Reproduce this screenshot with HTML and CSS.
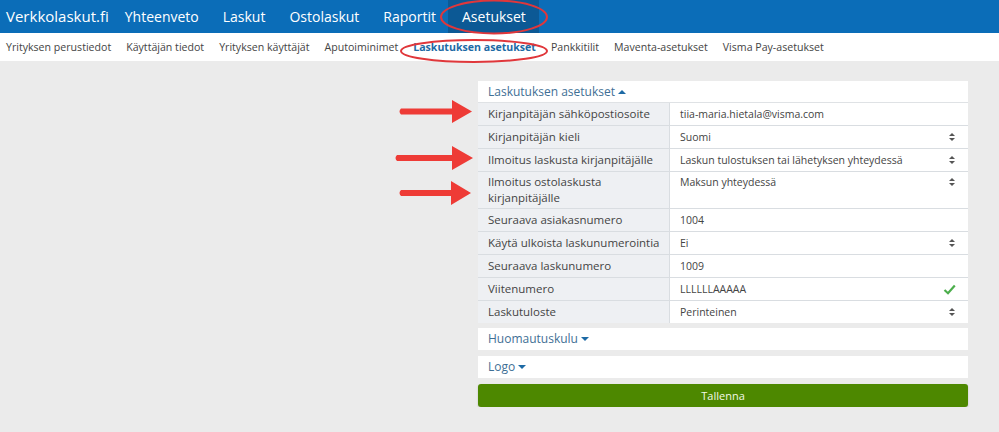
FILE: index.html
```html
<!DOCTYPE html>
<html lang="fi">
<head>
  <meta charset="UTF-8" />
  <meta name="viewport" content="width=device-width, initial-scale=1.0" />
  <title>Laskutuksen asetukset</title>
  <link rel="stylesheet" href="styles.css">
</head>
<body>
  <div class="topbar">
    <span class="brand">Verkkolaskut.fi</span>
    <span class="top-item">Yhteenveto</span>
    <span class="top-item">Laskut</span>
    <span class="top-item">Ostolaskut</span>
    <span class="top-item">Raportit</span>
    <span class="top-item active">Asetukset</span>
  </div>
  <div class="subnav">
    <span class="sub-item">Yrityksen perustiedot</span>
    <span class="sub-item">Käyttäjän tiedot</span>
    <span class="sub-item">Yrityksen käyttäjät</span>
    <span class="sub-item">Aputoiminimet</span>
    <span class="sub-item active">Laskutuksen asetukset</span>
    <span class="sub-item">Pankkitilit</span>
    <span class="sub-item">Maventa-asetukset</span>
    <span class="sub-item">Visma Pay-asetukset</span>
  </div>

  <div class="content">
    <div class="panel">
      <div class="panel-head open">Laskutuksen asetukset <span class="caret up"></span></div>
      <div class="rows">
        <div class="label">Kirjanpitäjän sähköpostiosoite</div>
        <div class="value">tiia-maria.hietala@visma.com</div>

        <div class="label">Kirjanpitäjän kieli</div>
        <div class="value">Suomi <span class="updown"></span></div>

        <div class="label">Ilmoitus laskusta kirjanpitäjälle</div>
        <div class="value">Laskun tulostuksen tai lähetyksen yhteydessä <span class="updown"></span></div>

        <div class="label tall">Ilmoitus ostolaskusta<br>kirjanpitäjälle</div>
        <div class="value tall">Maksun yhteydessä <span class="updown"></span></div>

        <div class="label">Seuraava asiakasnumero</div>
        <div class="value">1004</div>

        <div class="label">Käytä ulkoista laskunumerointia</div>
        <div class="value">Ei <span class="updown"></span></div>

        <div class="label">Seuraava laskunumero</div>
        <div class="value">1009</div>

        <div class="label">Viitenumero</div>
        <div class="value">LLLLLLAAAAA
          <svg class="check" width="13" height="11" viewBox="0 0 13 11"><path d="M1.5 6 L5 9.2 L11.8 1.5" fill="none" stroke="#4cae4c" stroke-width="2.2"/></svg>
        </div>

        <div class="label last">Laskutuloste</div>
        <div class="value last">Perinteinen <span class="updown"></span></div>
      </div>
    </div>

    <div class="panel">
      <div class="panel-head">Huomautuskulu <span class="caret down"></span></div>
    </div>
    <div class="panel">
      <div class="panel-head">Logo <span class="caret down"></span></div>
    </div>
    <button class="save">Tallenna</button>
  </div>

  <svg class="marks" width="999" height="432" viewBox="0 0 999 432">
    <g fill="none" stroke="#e0373b" stroke-width="2">
      <ellipse cx="494" cy="17" rx="53" ry="16.5"/>
      <ellipse cx="474" cy="51" rx="73" ry="11"/>
    </g>
    <g fill="#ee3b36">
      <path d="M401 108.5 H452 V100 L472 111.5 L452 123 V114.5 H401 Q398 111.5 401 108.5 Z"/>
      <path d="M397 155 H452 V146 L473 158 L452 170 V161 H397 Q394 158 397 155 Z"/>
      <path d="M401 190 H451 V181 L471 193 L451 205 V196 H401 Q398 193 401 190 Z"/>
    </g>
  </svg>
</body>
</html>
```

FILE: styles.css
```css
body {
  font-family: "Open Sans", Arial, sans-serif;
  background: #ebebeb;
  margin: 0;
  padding: 0;
  color: #444;
}
.topbar {
  background: #0b6db8;
  height: 33px;
  display: flex;
  align-items: stretch;
  padding-left: 6px;
}
.brand,
.top-item {
  color: white;
  font-size: 14px;
  line-height: 33px;
  white-space: nowrap;
}
.brand {
  font-size: 15px;
  margin-right: 4px;
}
.top-item {
  padding: 0 12px;
}
.top-item.active {
  background: #0c5995;
  padding: 0 13px 0 14px;
}
.subnav {
  background: white;
  height: 28px;
  display: flex;
  align-items: center;
  padding-left: 6px;
}
.sub-item {
  font-size: 10.6px;
  color: #444;
  margin-right: 15px;
  white-space: nowrap;
}
.sub-item.active {
  color: #1d6aa5;
  font-weight: bold;
}
.content {
  padding: 20px 0 0 478px;
  width: 490px;
}
.panel {
  background: white;
  margin-bottom: 6px;
}
.panel:first-child {
  margin-bottom: 5px;
}
.panel-head {
  color: #3f6f95;
  font-size: 12px;
  line-height: 22px;
  padding: 0 10px;
}
.panel-head.open {
  line-height: 21px;
  border-bottom: 1px solid #dfe2e5;
}
.caret {
  display: inline-block;
  width: 0;
  height: 0;
  border-left: 4px solid transparent;
  border-right: 4px solid transparent;
  vertical-align: middle;
  position: relative;
  top: -1px;
}
.caret.up {
  border-bottom: 4px solid #1d6aa5;
}
.caret.down {
  border-top: 4px solid #1d6aa5;
}
.rows {
  display: grid;
  grid-template-columns: 192px 298px;
}
.label {
  background: #eef0f3;
  color: #444;
  font-size: 11.5px;
  line-height: 22px;
  padding: 0 10px;
  white-space: nowrap;
  border-bottom: 1px solid #d9dde1;
  border-right: 1px solid #d9dde1;
}
.value {
  background: white;
  color: #444;
  font-size: 10.5px;
  line-height: 22px;
  padding: 0 10px;
  border-bottom: 1px solid #d9dde1;
  display: flex;
  justify-content: space-between;
  align-items: flex-start;
}
.label.tall,
.value.tall {
  line-height: 16px;
  padding-top: 2px;
  padding-bottom: 2px;
}
.label.last,
.value.last {
  border-bottom: none;
}
.updown {
  display: flex;
  flex-direction: column;
  align-items: center;
  gap: 2px;
  margin: 7px 3px 0 0;
}
.value.tall .updown {
  margin-top: 4px;
}
.updown::before,
.updown::after {
  content: "";
  width: 0;
  height: 0;
  border-left: 3px solid transparent;
  border-right: 3px solid transparent;
}
.updown::before {
  border-bottom: 3px solid #555;
}
.updown::after {
  border-top: 3px solid #555;
}
.check {
  margin-top: 6px;
  margin-right: 2px;
}
.save {
  display: block;
  width: 490px;
  height: 23px;
  background: #4d8800;
  color: #f2f8e6;
  border: none;
  border-radius: 3px;
  font-family: "Open Sans", Arial, sans-serif;
  font-size: 11px;
  box-shadow: 0 1px 2px rgba(0,0,0,0.2);
}
.marks {
  position: absolute;
  top: 0;
  left: 0;
  pointer-events: none;
}
```
